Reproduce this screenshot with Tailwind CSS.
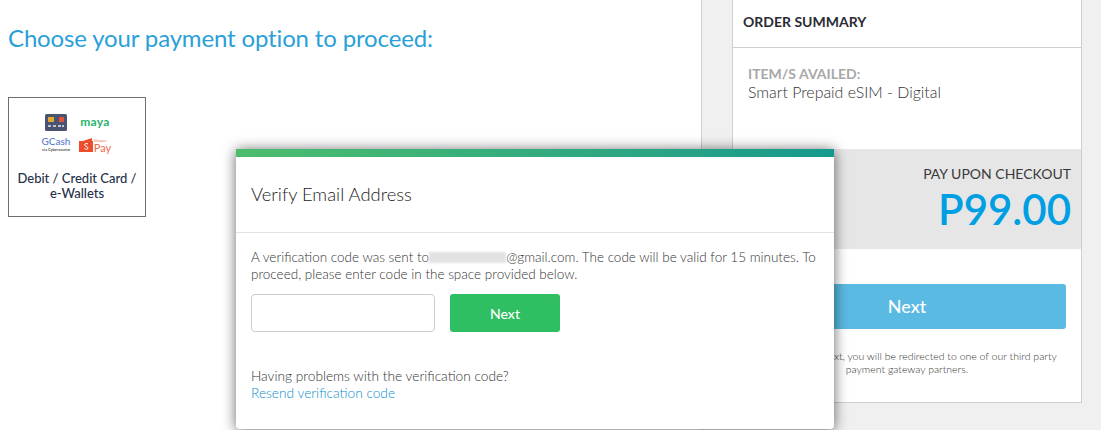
<!DOCTYPE html>
<html lang="en">
<head>
    <meta charset="UTF-8">
    <title>Checkout</title>
    <script src="https://cdn.jsdelivr.net/npm/@tailwindcss/browser@4"></script>
</head>
<body class="bg-white font-['Lato','Open_Sans',sans-serif] text-[#333]">
    <div class="relative flex h-[430px] w-[1101px] overflow-hidden">
        <!-- payment options -->
        <main class="w-[701px] shrink-0 pl-2">
            <h1 class="mt-[22px] text-[24px] leading-[32px] tracking-[-0.15px] text-[#2a9fd8]">Choose your payment option to proceed:</h1>
            <div class="mt-[43px] flex h-[120px] w-[138px] flex-col items-center border border-[#6f6f6f] pt-[16px]">
                <div class="grid h-[54px] w-[76px] grid-cols-[32px_44px] grid-rows-[22px_32px] justify-items-center">
                    <svg width="22" height="17" viewBox="0 0 22 17" class="ml-[2px]">
                        <rect width="22" height="17" rx="1.5" fill="#4a5470"/>
                        <rect x="3" y="3" width="6" height="5" fill="#e0a92e"/>
                        <rect x="14" y="3" width="5" height="5" fill="#e2533a"/>
                        <path d="M3 12h3M8 12h3M13 12h3M17 12h2" stroke="#e6e8ee" stroke-width="1.5"/>
                    </svg>
                    <span class="mt-[1px] ml-[4px] text-[12px] font-bold leading-[14px] tracking-[0.3px] text-[#1fb36b]">maya</span>
                    <div class="ml-[2px] flex flex-col items-center">
                        <span class="text-[10px] font-medium leading-[11px] text-[#5a7bd0]">GCash</span>
                        <span class="text-[4px] font-bold leading-[6px] text-[#555]">via Cybersource</span>
                    </div>
                    <div class="mt-[2px] ml-[4px] flex items-start gap-[1px]">
                        <svg width="14" height="14" viewBox="0 0 14 14">
                            <path d="M0 3h14v11H0z" fill="#ee4d2d"/>
                            <path d="M4 3l9-3v3z" fill="#ee4d2d"/>
                            <path d="M9 6C8 5.200 5.500 5.400 5.500 6.800S9 8.500 9 10 6.500 11.500 5.300 10.500" fill="none" stroke="#fff"/>
                        </svg>
                        <div class="flex flex-col">
                            <span class="text-[4px] leading-[5px] text-[#ee7a62]">Shopee</span>
                            <span class="text-[11px] leading-[10px] text-[#ee6a4e]">Pay</span>
                        </div>
                    </div>
                </div>
                <p class="mt-[3px] text-center text-[13px] font-medium leading-[15px] text-[#26304a]">Debit / Credit Card /<br>e-Wallets</p>
            </div>
        </main>

        <!-- order summary -->
        <aside class="flex-1 border-l border-[#cfcfcf] bg-[#f0f0f0] pr-[19px] pl-[30px]">
            <div class="flex h-[403px] flex-col border-x border-b border-[#cfcfcf] bg-white">
                <div class="flex h-[48px] shrink-0 items-center border-b border-[#cfcfcf] pb-[4px] pl-[10px]">
                    <h2 class="text-[14px] font-bold text-[#2b2b33]">ORDER SUMMARY</h2>
                </div>
                <div class="h-[101px] shrink-0 pt-[17px] pl-[15px]">
                    <p class="text-[14px] leading-[17px] font-bold text-[#a8a8a8]">ITEM/S AVAILED:</p>
                    <p class="text-[15.900px] leading-[20px] font-light text-[#333]">Smart Prepaid eSIM - Digital</p>
                </div>
                <div class="flex h-[100px] shrink-0 flex-col items-end bg-[#e6e6e6] pt-[16px] pr-[10px]">
                    <p class="text-[14px] leading-[18px] text-[#3a3a3a]">PAY UPON CHECKOUT</p>
                    <p class="text-[42px] leading-[52px] font-semibold text-[#009fe3]">P99.00</p>
                </div>
                <div class="flex flex-col items-center px-[15px] pt-[35px]">
                    <button class="h-[45px] w-full rounded-[3px] bg-[#5abae3] text-[18px] font-medium text-white">Next</button>
                    <p class="mt-[21px] text-center text-[10.500px] leading-[13px] font-light text-[#333]">Upon clicking Next, you will be redirected to one of our third party<br>payment gateway partners.</p>
                </div>
            </div>
        </aside>

        <!-- verify email modal -->
        <div class="absolute top-[149px] left-[236px] h-[280px] w-[598px] rounded-b-[4px] bg-white shadow-[0_1px_14px_rgba(0,0,0,0.6)]">
            <div class="h-[8px] bg-gradient-to-r from-[#4cbd6c] to-[#14998c]"></div>
            <div class="flex h-[76px] items-center border-b border-[#e3e3e3] px-[15px]">
                <h3 class="text-[18.400px] font-light text-[#222]">Verify Email Address</h3>
            </div>
            <div class="px-[15px] pt-[16px]">
                <p class="text-[13.500px] leading-[17px] font-light text-[#333]">A verification code was sent to<span class="inline-block h-[11px] w-[77px] bg-[#e2e2e2] align-[-1px] blur-[1px]"></span>@gmail.com. The code will be valid for 15 minutes. To proceed, please enter code in the space provided below.</p>
                <div class="mt-[11px] flex gap-[15px]">
                    <input type="text" class="h-[38px] w-[184px] rounded-[4px] border border-[#cccccc] bg-white">
                    <button class="h-[38px] w-[110px] rounded-[3px] bg-[#2fbe62] text-[14px] font-medium text-white">Next</button>
                </div>
                <p class="mt-[35px] text-[13.700px] leading-[17px] font-light text-[#333]">Having problems with the verification code?</p>
                <a href="#" class="block text-[13.700px] leading-[17px] font-light text-[#0a8fd0]">Resend verification code</a>
            </div>
        </div>
    </div>
</body>
</html>
